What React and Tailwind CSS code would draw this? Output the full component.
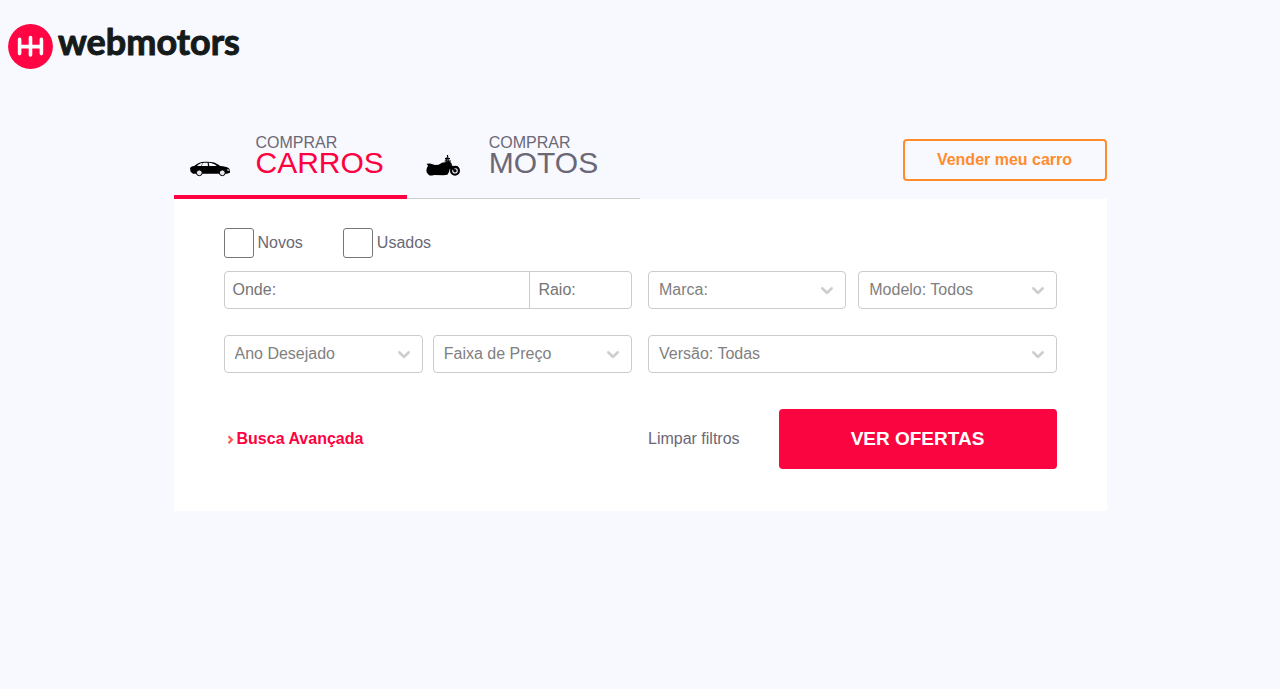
import React from "react";

function Logo() {
  return (
    <svg width="240" height="60" viewBox="0 -8 240 60" role="img" aria-label="webmotors">
      <circle cx="22.5" cy="22.5" r="22.4" fill="#ff0543" />
      <path
        d="M11.6 15.4v14.2M22.5 13.6v17.4M33.4 15.4v14.2M11.6 22.6h21.8"
        stroke="#fff"
        strokeWidth="3.6"
        strokeLinecap="round"
        fill="none"
      />
      <text
        x="50"
        y="31"
        fontFamily="Lato, sans-serif"
        fontWeight="700"
        fontSize="36"
        fill="#151a1a"
        stroke="#151a1a"
        strokeWidth="1"
        strokeLinejoin="round"
      >
        webmotors
      </text>
    </svg>
  );
}

function CarIcon() {
  return (
    <svg width="40" height="16" viewBox="0 0 40 16" aria-hidden="true">
      <path d="M0 7.2C.4 5.8 1.8 5.200 4.200 4.900 7 3 9.500 1.300 12 1c4-.5 8-.4 11 .2 2.500.6 5 2.200 7.300 3.800 3.500.3 6.700.8 8.500 2.200 1 .8 1.200 2.300 1.200 4.500l-3 1H3L.6 10.800z" />
      <path d="M7 5c1.600-1.500 3.200-2.600 5.200-2.900l-.8 2.900zM12.600 2c1.700-.3 3.600-.3 5-.2l.4 3.200h-6.100zM18.700 1.800c3.200.1 5.800 1.300 8 3.100l-7.400.2z" fill="#f8f8ff" />
      <circle cx="9.300" cy="11.800" r="2.900" stroke="#000" strokeWidth="1" fill="#e8e8ec" />
      <circle cx="32.300" cy="11.800" r="2.900" stroke="#000" strokeWidth="1" fill="#e8e8ec" />
      <path d="M36.800 8.300l2.200.3.300 1.400-2-.4z" fill="#d8d8dc" />
    </svg>
  );
}

function MotoIcon() {
  return (
    <svg width="34" height="22" viewBox="0 0 34 22" aria-hidden="true">
      <circle cx="5.600" cy="15.400" r="5.200" />
      <circle cx="29" cy="15.800" r="3.900" fill="none" stroke="#000" strokeWidth="2.200" />
      <circle cx="29" cy="15.800" r="1.700" />
      <path d="M.6 8.800l3.400-.2 5 1.300 3.600-.2 3.400-1.900 4.200-.9 1.600-1 2.200.7 1.400 1.900-.8 1.400 1.600 1.500 5-.2 2 1.400-4.600.8-2.600 1.900-2.200-1.600-.8 3.400-1.600 2.600-4 .6-9.400-.2-5 .2L.8 13.500 2 10.800z" />
      <path d="M20.200 6.800l.2-4.300M22.400 7L21.400 0M24.400 8l3.600 7.400" stroke="#000" strokeWidth="1.200" fill="none" />
      <path d="M19 3.600h5M18.600 6h6.400" stroke="#000" strokeWidth="1.200" />
    </svg>
  );
}

function Tab({ icon, name, active }) {
  return (
    <button
      type="button"
      role="tab"
      aria-selected={active}
      className={
        active
          ? "flex h-16 flex-1 items-start border-b-4 border-[#ff0040] pl-4 text-left"
          : "flex h-16 flex-1 items-start border-b border-[#cccccc] pl-4 text-left"
      }
    >
      <span className="flex h-[42px] w-10 items-end justify-center">{icon}</span>
      <span className="flex flex-col pl-[26px]">
        <span className="text-base leading-4 text-[#6b6876]">COMPRAR</span>
        <span
          className={
            active
              ? "text-[30px] leading-6 text-[#ff0040]"
              : "text-[30px] leading-6 text-[#6b6876]"
          }
        >
          {name}
        </span>
      </span>
    </button>
  );
}

function Check({ label }) {
  return (
    <label className="flex items-center gap-1 text-[#6b6876]">
      <input
        type="checkbox"
        className="size-[30px] appearance-none rounded-[3px] border border-[#767676] bg-white checked:bg-[#ff0040]"
      />
      {label}
    </label>
  );
}

function Select({ label }) {
  return (
    <div className="grid min-w-0 flex-1 items-center">
      <select
        aria-label={label}
        className="col-start-1 row-start-1 h-[38px] w-full appearance-none rounded border border-[#cccccc] bg-white pr-9 pl-[10px] text-[#808080]"
      >
        <option>{label}</option>
      </select>
      <svg
        className="pointer-events-none col-start-1 row-start-1 mr-[9px] justify-self-end"
        width="20"
        height="20"
        viewBox="0 0 20 20"
        fill="#cccccc"
        stroke="#cccccc"
        strokeWidth="0.4"
        aria-hidden="true"
      >
        <path d="M4.516 7.548c0.436-0.446 1.043-0.481 1.576 0l3.908 3.747 3.908-3.747c0.533-0.481 1.141-0.446 1.574 0 0.436 0.445 0.408 1.197 0 1.615-0.406 0.418-4.695 4.502-4.695 4.502-0.217 0.223-0.502 0.335-0.787 0.335s-0.570-0.112-0.789-0.335c0 0-4.287-4.084-4.695-4.502s-0.436-1.170 0-1.615z" />
      </svg>
    </div>
  );
}

export default function App() {
  return (
    <div className="min-h-screen bg-[#f8f8ff] pb-10 font-['Liberation_Sans',Arial,sans-serif] text-base">
      <header className="px-2 pt-4">
        <a href="#" className="block w-fit">
          <Logo />
        </a>
      </header>
      <main className="mx-auto mt-[59px] max-w-[933px]">
        <div className="flex items-start justify-between">
          <div role="tablist" className="flex w-1/2">
            <Tab icon={<CarIcon />} name="CARROS" active />
            <Tab icon={<MotoIcon />} name="MOTOS" active={false} />
          </div>
          <button
            type="button"
            className="mt-1 h-[42px] w-[204px] rounded border-2 border-[#ff8c2c] font-bold text-[#ff8c2c]"
          >
            Vender meu carro
          </button>
        </div>
        <form className="bg-white px-[50px] pt-[29px] pb-[42px]" onSubmit={(e) => e.preventDefault()}>
          <div className="flex gap-10">
            <Check label="Novos" />
            <Check label="Usados" />
          </div>
          <div className="mt-[13px] grid grid-cols-2 gap-x-4 gap-y-[26px]">
            <div className="flex h-[38px] rounded border border-[#cccccc]">
              <input
                aria-label="Onde"
                placeholder="Onde:"
                className="w-3/4 min-w-0 px-2 placeholder:text-[#757575]"
              />
              <input
                aria-label="Raio"
                placeholder="Raio:"
                className="w-1/4 min-w-0 border-l border-[#cccccc] px-2 placeholder:text-[#757575]"
              />
            </div>
            <div className="flex gap-3">
              <Select label="Marca:" />
              <Select label="Modelo: Todos" />
            </div>
            <div className="flex gap-[10px]">
              <Select label="Ano Desejado" />
              <Select label="Faixa de Preço" />
            </div>
            <Select label="Versão: Todas" />
          </div>
          <div className="mt-9 grid grid-cols-2 items-center gap-x-4">
            <button type="button" className="flex items-center gap-[3px] pl-[3px] font-bold text-[#ff0040]">
              <svg width="7" height="9" viewBox="0 0 7 9" fill="none" aria-hidden="true">
                <path d="M1.500 1.200L4.900 4.700 1.500 8.200" stroke="#ff5a4a" strokeWidth="2.200" />
              </svg>
              Busca Avançada
            </button>
            <div className="flex items-center justify-between">
              <button type="reset" className="text-[#6b6876]">
                Limpar filtros
              </button>
              <button type="submit" className="h-15 w-[278px] rounded bg-[#fa053f] text-[19px] font-bold text-white">
                VER OFERTAS
              </button>
            </div>
          </div>
        </form>
      </main>
    </div>
  );
}
